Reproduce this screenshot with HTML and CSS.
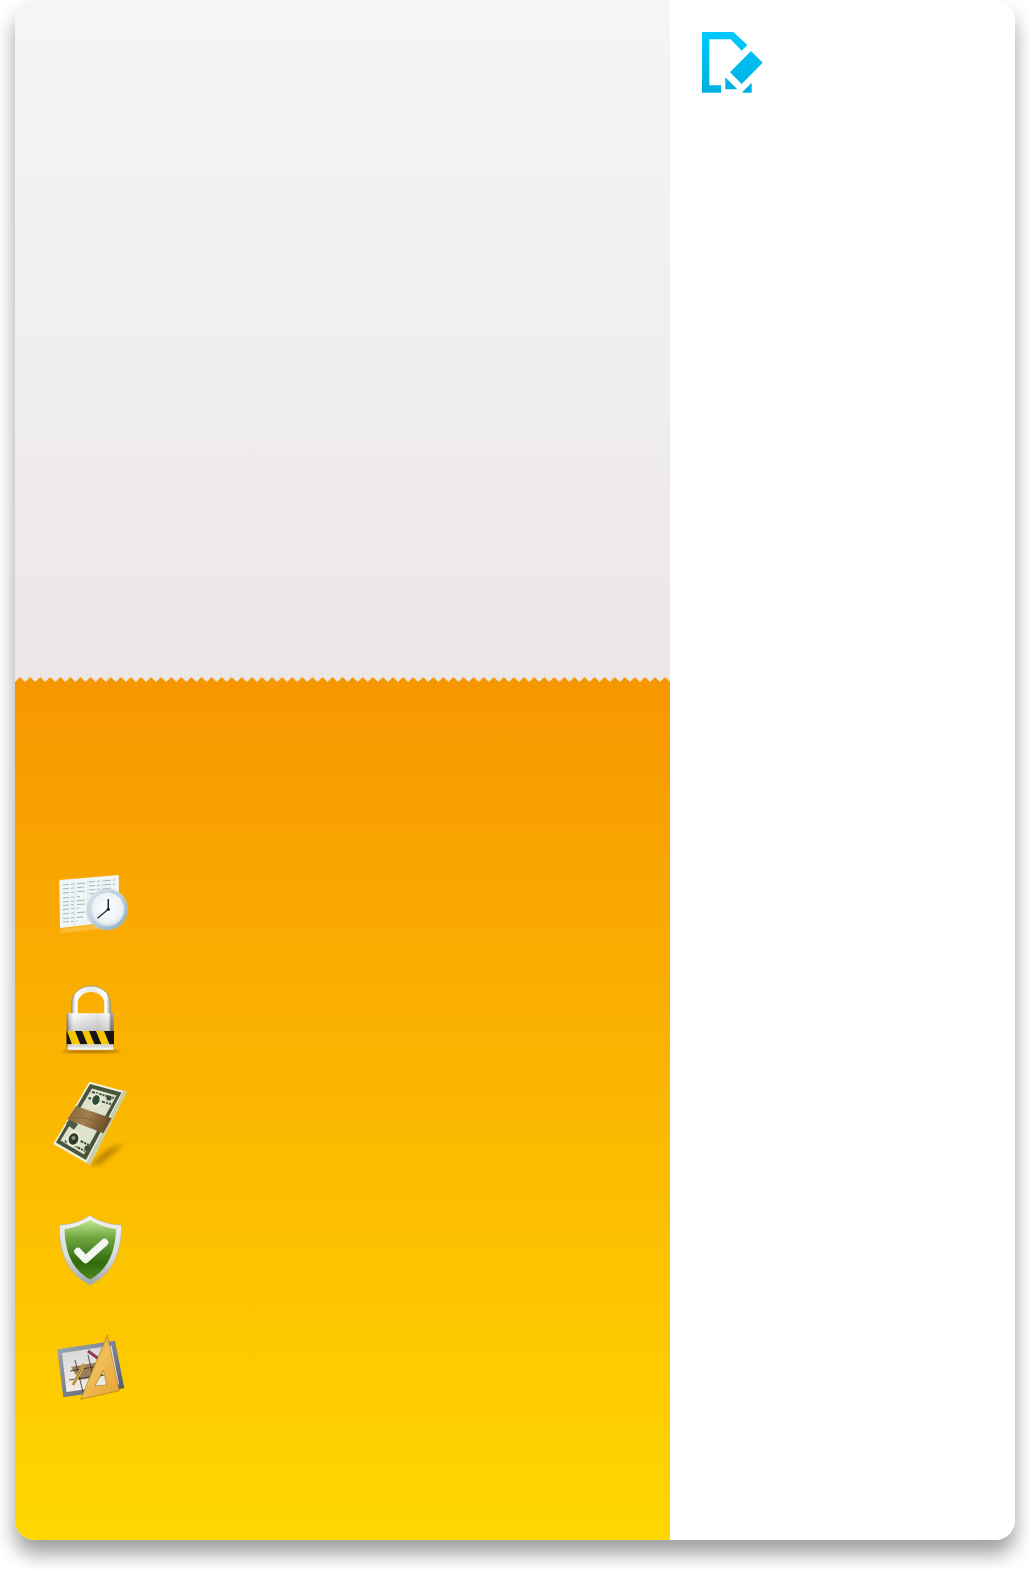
FILE: index.html
```html
<!DOCTYPE html>
<html lang="en">
<head>
<meta charset="utf-8">
<title>Document editor</title>
<link rel="stylesheet" href="styles.css">
</head>
<body>
<main class="card">
  <section class="left">
    <div class="top-panel"></div>
    <svg class="teeth" width="655" height="5" aria-hidden="true">
      <defs>
        <pattern id="tooth" width="10.08" height="5" patternUnits="userSpaceOnUse">
          <polygon points="0,5 5.04,0 10.08,5" fill="#f79700"/>
        </pattern>
      </defs>
      <rect width="655" height="5" fill="url(#tooth)"/>
    </svg>
    <div class="bottom-panel">
      <ul class="icons">
        <li>
          <svg class="icon clock" viewBox="50 870 80 90" aria-hidden="true">
            <defs>
              <radialGradient id="clockFace" cx=".5" cy=".45" r=".6"><stop offset="0" stop-color="#fff"/><stop offset=".7" stop-color="#eef2f5"/><stop offset="1" stop-color="#c0d2de"/></radialGradient>
              <linearGradient id="clockRim" x1="0" y1="0" x2="1" y2="1"><stop offset="0" stop-color="#dfe8ee"/><stop offset=".5" stop-color="#bcd0dc"/><stop offset="1" stop-color="#86a9bf"/></linearGradient>
              <filter id="soft1"><feGaussianBlur stdDeviation="1"/></filter>
            </defs>
            <polygon points="60,929 119,921 119,927 60,933" fill="#ffe0a0" opacity=".4" filter="url(#soft1)"/>
            <polygon points="59.300,880 118.700,875 119.200,921 60,928" fill="#f0f6f6"/>
            <g stroke="#9db5bf" stroke-width="1" stroke-dasharray="6 2 3 3 8 2">
              <path d="M63 885 L86 883M63 889 L84 887M63 893 L86 891M63 898 L80 896.500M63 902 L86 900M63 905.500 L85 904M63 909.500 L79 908M63 914 L85 912M63 918.500 L83 917M63 922 L78 921"/>
              <path d="M89 882 L115 880M89 886 L115 884M89 890 L112 888M89 894 L102 893"/>
            </g>
            <path d="M75 882V925M88 880V922M102 879V892" stroke="#cfdde2" stroke-width=".6"/>
            <circle cx="107" cy="909.300" r="20.800" fill="url(#clockRim)"/>
            <circle cx="107.500" cy="909.300" r="17" fill="url(#clockFace)" stroke="#b7ccd8" stroke-width=".6"/>
            <path d="M108.300 909.300V899" stroke="#20262c" stroke-width="1.500"/>
            <path d="M108.300 909.300L97.500 918.300" stroke="#20262c" stroke-width="1.200"/>
            <circle cx="108.300" cy="909.300" r="1.600" fill="#20262c"/>
          </svg>
        </li>
        <li>
          <svg class="icon lock" viewBox="50 960 80 115" aria-hidden="true">
            <defs>
              <linearGradient id="shackle" gradientUnits="userSpaceOnUse" x1="71" y1="0" x2="111" y2="0"><stop offset="0" stop-color="#9a9a94"/><stop offset=".12" stop-color="#fff"/><stop offset=".5" stop-color="#e6e6e2"/><stop offset=".88" stop-color="#fff"/><stop offset="1" stop-color="#8a8a84"/></linearGradient>
              <linearGradient id="lockBody" x1="0" y1="0" x2="1" y2="0"><stop offset="0" stop-color="#4a4a4a"/><stop offset=".06" stop-color="#c8c8c8"/><stop offset=".15" stop-color="#fff"/><stop offset=".65" stop-color="#dedede"/><stop offset=".88" stop-color="#f8f8f8"/><stop offset=".95" stop-color="#555"/><stop offset="1" stop-color="#888"/></linearGradient>
              <linearGradient id="lockShade" x1="0" y1="0" x2="0" y2="1"><stop offset="0" stop-color="#fff" stop-opacity=".4"/><stop offset="1" stop-color="#888" stop-opacity=".35"/></linearGradient>
              <filter id="soft2"><feGaussianBlur stdDeviation="1.100"/></filter>
              <clipPath id="stripeClip"><rect x="66.500" y="1031" width="47.500" height="13.500"/></clipPath>
            </defs>
            <ellipse cx="91" cy="1051.500" rx="30" ry="1.600" fill="#7a4a00" opacity=".55" filter="url(#soft2)"/>
            <path d="M74.700 1014V1003a16.300 14 0 0 1 32.600 0V1014" fill="none" stroke="url(#shackle)" stroke-width="6"/>
            <path d="M71.600 1014V1003a19.400 17 0 0 1 38.800 0V1014" fill="none" stroke="#8a8a84" stroke-width=".7"/>
            <rect x="66.700" y="1013.300" width="47.300" height="36.500" rx="1.500" fill="url(#lockBody)"/>
            <rect x="66.700" y="1013.300" width="47.300" height="17.700" fill="url(#lockShade)"/>
            <rect x="66.500" y="1031" width="47.500" height="13.500" fill="#f7c600"/>
            <g clip-path="url(#stripeClip)" fill="#151515">
              <polygon points="60,1031 67,1031 72,1044.500 65,1044.500"/>
              <polygon points="75,1031 82,1031 87.500,1044.500 80.500,1044.500"/>
              <polygon points="89,1031 96,1031 101.500,1044.500 94.500,1044.500"/>
              <polygon points="104,1031 120,1031 120,1044.500 109.500,1044.500"/>
            </g>
            <rect x="67.500" y="1044.500" width="46" height="5" fill="#d9d9d9"/>
            <rect x="67.500" y="1047.500" width="46" height="2" fill="#f4f4f4"/>
          </svg>
        </li>
        <li>
          <svg class="icon money" viewBox="50 1075 80 115" aria-hidden="true">
            <defs>
              <linearGradient id="band" x1="0" y1="0" x2="1" y2=".3"><stop offset="0" stop-color="#84602f"/><stop offset=".5" stop-color="#a58052"/><stop offset="1" stop-color="#6e4f2b"/></linearGradient>
              <filter id="soft3"><feGaussianBlur stdDeviation="2.500"/></filter>
            </defs>
            <polygon points="90,1165 106,1150 125,1143 100,1165" fill="#6b4a00" opacity=".45" filter="url(#soft3)"/>
            <polygon points="89.300,1081.700 126.700,1091.700 90,1165 53.300,1144" fill="#f0f0da"/>
            <polygon points="126.700,1091.700 123.500,1090.500 86.500,1162.500 90,1165" fill="#c8cca8"/>
            <polygon points="90,1084 121.500,1092.500 86,1160 56,1142.500" fill="#47553d"/>
            <polygon points="92,1088.500 116.500,1095.500 84,1154.500 60.500,1140.500" fill="#dfe2ca"/>
            <path d="M92 1092L114 1098M88.500 1098L111 1104M68 1135L89 1145M65 1141L85 1151" stroke="#3f4c38" stroke-width="2" stroke-dasharray="3 1 2 1"/>
            <ellipse cx="96" cy="1100" rx="5" ry="6.500" transform="rotate(16 96 1100)" fill="#f0f0dc"/>
            <ellipse cx="96" cy="1100" rx="3.600" ry="5" transform="rotate(16 96 1100)" fill="#2f4a38"/>
            <ellipse cx="73.500" cy="1139" rx="7" ry="8" transform="rotate(20 73.500 1139)" fill="#ecedd8"/>
            <ellipse cx="73.500" cy="1139" rx="4.800" ry="5.800" transform="rotate(20 73.500 1139)" fill="#2e3a30"/>
            <circle cx="73.500" cy="1138" r="2" fill="#8e9a7e"/>
            <circle cx="109" cy="1098" r="2.600" fill="#3f4c38"/>
            <circle cx="87" cy="1148" r="2.600" fill="#3f4c38"/>
            <path d="M76 1127L68 1121" stroke="#4d5b46" stroke-width="7"/>
            <polygon points="67.300,1119.300 76,1106 111.700,1118.300 103.300,1133.300" fill="url(#band)"/>
            <path d="M74 1118Q88 1116 101 1125" stroke="#68492a" stroke-width=".8" fill="none" opacity=".6"/>
          </svg>
        </li>
        <li>
          <svg class="icon shield" viewBox="50 1190 80 120" aria-hidden="true">
            <defs>
              <linearGradient id="shieldRim" x1="0" y1="0" x2="0" y2="1"><stop offset="0" stop-color="#f2f4f2"/><stop offset=".6" stop-color="#d6dbd9"/><stop offset="1" stop-color="#9ea6ab"/></linearGradient>
              <linearGradient id="shieldFill" x1="0" y1="0" x2="0" y2="1"><stop offset="0" stop-color="#c3e88f"/><stop offset=".3" stop-color="#6ea640"/><stop offset=".72" stop-color="#2f6a0a"/><stop offset="1" stop-color="#4f8a1d"/></linearGradient>
            </defs>
            <path d="M90 1215.300C84 1220 72 1225 59.300 1225C59 1250 66 1273 90 1285C114 1273 121.500 1250 121.700 1225C108 1225 96 1220 90 1215.300Z" fill="url(#shieldRim)" stroke="#a7b0ac" stroke-width=".6"/>
            <path d="M90 1220C83 1224 74 1228 64.500 1229C65 1250 71 1269 90 1279.500C109 1269 115.500 1250 116 1229C106 1228 97 1224 90 1220Z" fill="url(#shieldFill)"/>
            <path d="M78 1251.500L85.500 1259.500L104.500 1242.500" fill="none" stroke="#f4f6f2" stroke-width="7.500" stroke-linecap="round" stroke-linejoin="round"/>
          </svg>
        </li>
        <li>
          <svg class="icon tools" viewBox="50 1310 80 110" aria-hidden="true">
            <defs>
              <linearGradient id="setSquare" x1="0" y1="0" x2=".8" y2="1"><stop offset="0" stop-color="#d8922a"/><stop offset=".5" stop-color="#f0bf58"/><stop offset="1" stop-color="#e8a53a"/></linearGradient>
              <linearGradient id="frame" x1="0" y1="0" x2="1" y2="1"><stop offset="0" stop-color="#a2aab6"/><stop offset="1" stop-color="#4f5868"/></linearGradient>
              <linearGradient id="sheet" x1="0" y1="0" x2="0" y2="1"><stop offset="0" stop-color="#d5d8dc"/><stop offset="1" stop-color="#f2ede2"/></linearGradient>
            </defs>
            <polygon points="57.300,1349.300 115,1340.700 124.300,1388.300 63.300,1397.300" fill="url(#frame)"/>
            <polygon points="62,1353 111.500,1345.500 119,1384.500 66.500,1392" fill="url(#sheet)"/>
            <polygon points="71,1367 99,1362 103,1376 79,1380" fill="#9c7f58"/>
            <path d="M70 1371L100 1366M69 1380L104 1375M75 1360L83 1392M88 1355L95 1385" stroke="#2e2a26" stroke-width=".8"/>
            <path d="M88 1351L103 1362" stroke="#8e3d4d" stroke-width="3"/>
            <path d="M73 1385L84 1364" stroke="#d8b04e" stroke-width="3.500"/>
            <path d="M73 1385L84 1364" stroke="#4e4430" stroke-width=".6"/>
            <path fill-rule="evenodd" d="M107.300 1335L119.300 1390.700L80.700 1399.300ZM103.300 1370L95 1386L106.700 1385Z" fill="url(#setSquare)" stroke="#a96e1a" stroke-width=".6"/>
          </svg>
        </li>
      </ul>
    </div>
  </section>
  <aside class="right">
    <svg class="logo" viewBox="60 90 195 195" aria-hidden="true">
      <defs>
        <linearGradient id="logoFill" gradientUnits="userSpaceOnUse" x1="0" y1="96" x2="0" y2="278"><stop offset="0" stop-color="#00caff"/><stop offset="1" stop-color="#00aede"/></linearGradient>
      </defs>
      <path fill="url(#logoFill)" d="M66 96H160L202 135L185 152L152 118H88V256H123V278H66Z"/>
      <path fill="url(#logoFill)" d="M213 153L248 188L185 252L150 217Z"/>
      <path fill="url(#logoFill)" d="M136 232L172 268H136Z"/>
      <path fill="url(#logoFill)" d="M215 248V278H188V275Z"/>
    </svg>
  </aside>
</main>
</body>
</html>
```
FILE: styles.css
```css
html, body {
  margin: 0;
  padding: 0;
  background: #fff;
}

body {
  padding: 0 15px 29px 15px;
  font-family: "Liberation Sans", Arial, sans-serif;
}

.card {
  display: flex;
  width: 1000px;
  height: 1540px;
  border-radius: 20px;
  overflow: hidden;
  background: #fff;
  box-shadow: 0 14px 20px rgba(0, 0, 0, 0.38);
}

.left {
  display: flex;
  flex-direction: column;
  width: 655px;
  flex: none;
}

.top-panel {
  height: 677px;
  flex: none;
  background: linear-gradient(to bottom, #f5f5f5, #ece7e7);
}

.teeth {
  display: block;
  flex: none;
  background: #ece7e7;
}

.bottom-panel {
  flex: 1;
  padding-top: 188px;
  background: linear-gradient(to bottom, #f79700, #ffd700);
}

.icons {
  list-style: none;
  margin: 0;
  padding: 0 0 0 35px;
}

.icon {
  display: block;
  width: 80px;
}

.clock { height: 90px; }
.lock { height: 115px; }
.money { height: 115px; }
.shield { height: 120px; }
.tools { height: 110px; }

.right {
  flex: 1;
  padding: 30px 0 0 30px;
  background: #fff;
}

.logo {
  display: block;
  width: 65px;
  height: 65px;
}
```
